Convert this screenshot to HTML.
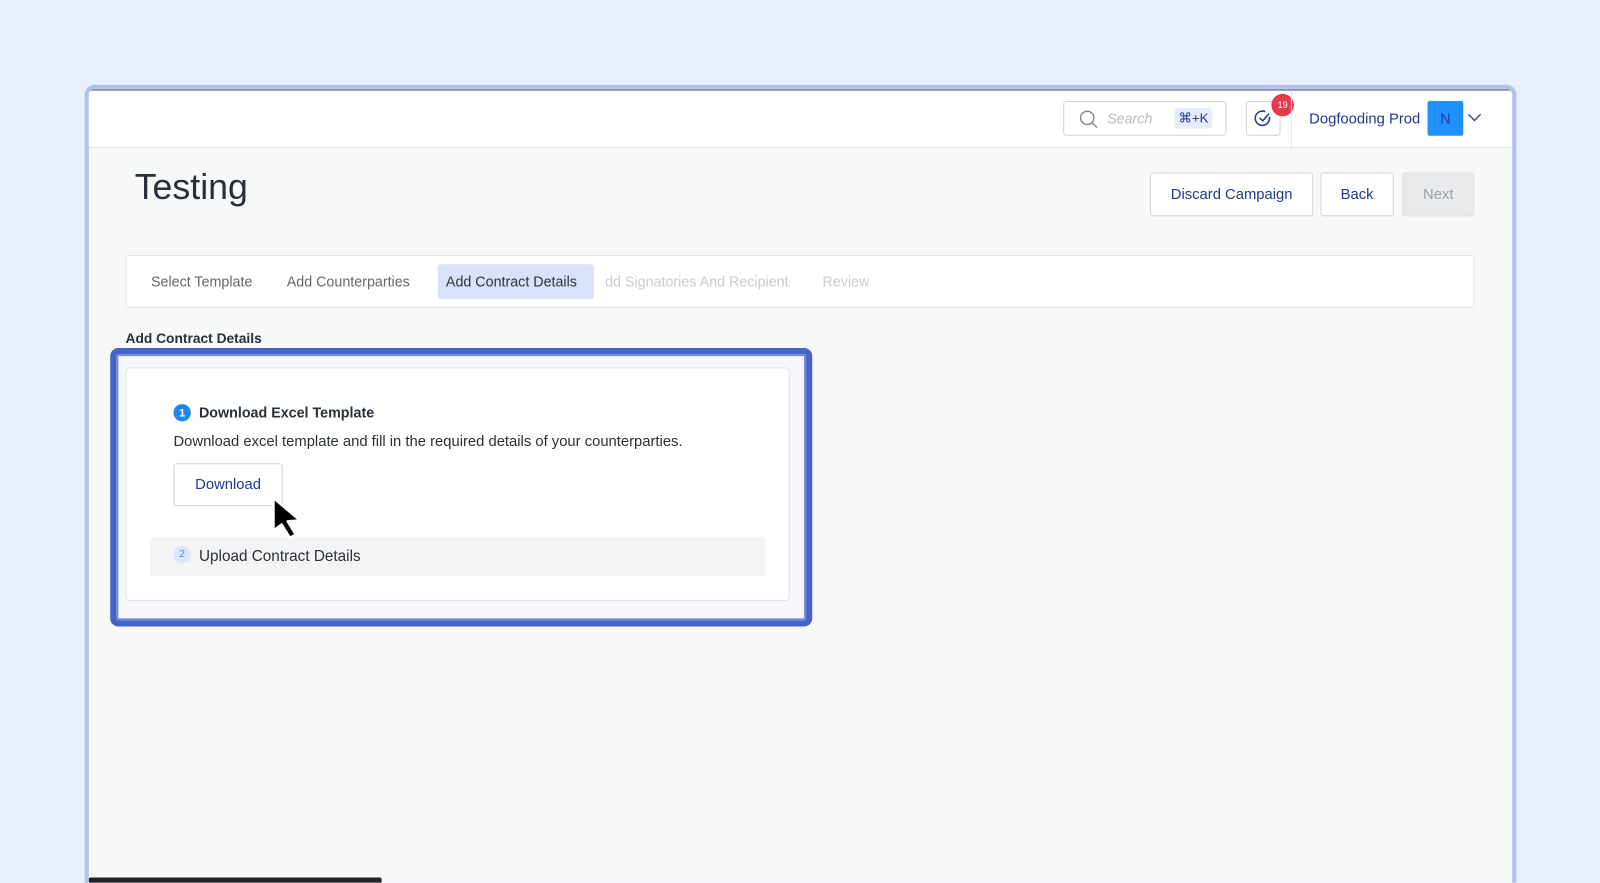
<!DOCTYPE html>
<html><head><meta charset="utf-8"><style>
*{box-sizing:border-box;margin:0;padding:0}
html,body{width:1600px;height:883px;overflow:hidden}
body{background:#e9effd;font-family:"Liberation Sans",sans-serif;position:relative}
.wrap{position:absolute;left:0;top:0;width:1568px;height:865px;overflow:hidden;transform:scale(1.0204);transform-origin:0 0}
.frame{position:absolute;left:83px;top:83px;width:1403px;height:800px;border:4px solid #b0c0ef;border-radius:10px;background:#f7f8f8;overflow:hidden}
.hdr{position:absolute;left:0;top:0;right:0;height:58px;background:#fff;border-bottom:1px solid #e3e5e8;border-top:2px solid #8a92a8}
.abs{position:absolute}
.btn{position:absolute;border:1px solid #d0d4da;border-radius:3px;background:#fff;color:#1f3a8f;font-size:14.5px;display:flex;align-items:center;justify-content:center}
</style></head><body>
<div class="wrap">
<div class="frame">
 <div class="hdr">
  <div class="btn" style="left:955px;top:10px;width:160px;height:34px;justify-content:flex-start">
   <svg class="abs" style="left:14px;top:7px" width="20" height="20" viewBox="0 0 20 20"><circle cx="8.5" cy="8.5" r="6.5" fill="none" stroke="#8a8f99" stroke-width="1.5"/><path d="M13 13l5 5" stroke="#8a8f99" stroke-width="1.5"/></svg>
   <span class="abs" style="left:42px;top:8px;color:#b5b9c0;font-style:italic;font-size:14px">Search</span>
   <span class="abs" style="left:108px;top:6px;background:#e6ecfb;color:#1f3a8f;font-size:13px;padding:2px 4px;border-radius:3px">⌘+K</span>
  </div>
  <div class="btn" style="left:1134px;top:10px;width:34px;height:34px">
   <svg width="18" height="18" viewBox="0 0 18 18"><path d="M15 7.5A7 7 0 1 1 11 2.5" fill="none" stroke="#1f3a8f" stroke-width="1.5"/><path d="M5.5 8.5l3 3 6-7" fill="none" stroke="#1f3a8f" stroke-width="1.5"/></svg>
  </div>
  <div class="abs" style="left:1159px;top:3px;width:22px;height:22px;border-radius:50%;background:#e5384b;color:#fff;font-size:9px;display:flex;align-items:center;justify-content:center">19</div>
  <div class="abs" style="left:1178px;top:0;width:1px;height:58px;background:#e3e5e8"></div>
  <span class="abs" style="left:1196px;top:20px;color:#1f3a8f;font-size:14.5px">Dogfooding Prod</span>
  <div class="abs" style="left:1312px;top:10px;width:35px;height:34px;background:#1e90ff;border-radius:2px;color:#1f3a8f;font-size:14px;display:flex;align-items:center;justify-content:center">N</div>
  <svg class="abs" style="left:1351px;top:21px" width="14" height="10" viewBox="0 0 14 10"><path d="M1 2l6 6 6-6" fill="none" stroke="#1f3a8f" stroke-width="1.3"/></svg>
 </div>
 <div class="abs" style="left:45px;top:77px;font-size:35px;color:#2a2f3a">Testing</div>
 <div class="btn" style="left:1040px;top:82px;width:160px;height:43px">Discard Campaign</div>
 <div class="btn" style="left:1207px;top:82px;width:72px;height:43px">Back</div>
 <div class="btn" style="left:1287px;top:82px;width:71px;height:43px;background:#e8e9eb;color:#9ba0a8;border-color:#e0e2e5">Next</div>
 <div class="abs" style="left:36px;top:163px;width:1322px;height:52px;background:#fff;border:1px solid #e1e3e6;border-radius:3px;font-size:14px">
  <span class="abs" style="left:24px;top:17px;color:#666">Select Template</span>
  <span class="abs" style="left:157px;top:17px;color:#666">Add Counterparties</span>
  <span class="abs" style="left:305px;top:8px;width:153px;height:34px;background:#d9e1fb;border-radius:3px;color:#333;padding:9px 0 0 8px">Add Contract Details</span>
  <span class="abs" style="left:469px;top:17px;color:#c9ccd1">dd Signatories And Recipient</span>
  <span class="abs" style="left:682px;top:17px;color:#c9ccd1">Review</span>
 </div>
 <div class="abs" style="left:36px;top:237px;font-size:13.5px;font-weight:bold;color:#2a2f3a">Add Contract Details</div>
 <div class="abs" style="left:21px;top:254px;width:688px;height:273px;border:6px solid #4563c9;border-radius:8px;background:#f6f7fa;box-shadow:inset 0 0 0 2px #6f87d8"></div>
 <div class="abs" style="left:36px;top:273px;width:651px;height:229px;background:#fff;border:1px solid #e1e3e6;border-radius:4px">
  <div class="abs" style="left:46px;top:35px;width:17px;height:17px;border-radius:50%;background:#1e88f0;color:#fff;font-size:11px;font-weight:bold;display:flex;align-items:center;justify-content:center">1</div>
  <span class="abs" style="left:71px;top:35px;font-size:14px;font-weight:bold;color:#2a2f3a">Download Excel Template</span>
  <span class="abs" style="left:46px;top:64px;font-size:14.5px;color:#2a2f3a">Download excel template and fill in the required details of your counterparties.</span>
  <div class="btn" style="left:46px;top:93px;width:107px;height:42px">Download</div>
  <div class="abs" style="left:23px;top:165px;width:603px;height:39px;background:#f4f4f5;border-radius:3px">
   <div class="abs" style="left:23px;top:9px;width:17px;height:17px;border-radius:50%;background:#dbe6fd;color:#4a8cf0;font-size:10px;display:flex;align-items:center;justify-content:center">2</div>
   <span class="abs" style="left:48px;top:11px;font-size:15px;color:#2a2f3a">Upload Contract Details</span>
  </div>
  <svg class="abs" style="left:140px;top:125px" width="40" height="44" viewBox="0 0 40 44"><path d="M4 2L30 24 18 25 26 38 20 41 12 28 4 34z" fill="#000" stroke="#fff" stroke-width="2.5" stroke-linejoin="round"/></svg>
 </div>
 <div class="abs" style="left:0;top:773px;width:287px;height:6px;background:#222;border-radius:2px"></div>
</div>
</div>
</body></html>
